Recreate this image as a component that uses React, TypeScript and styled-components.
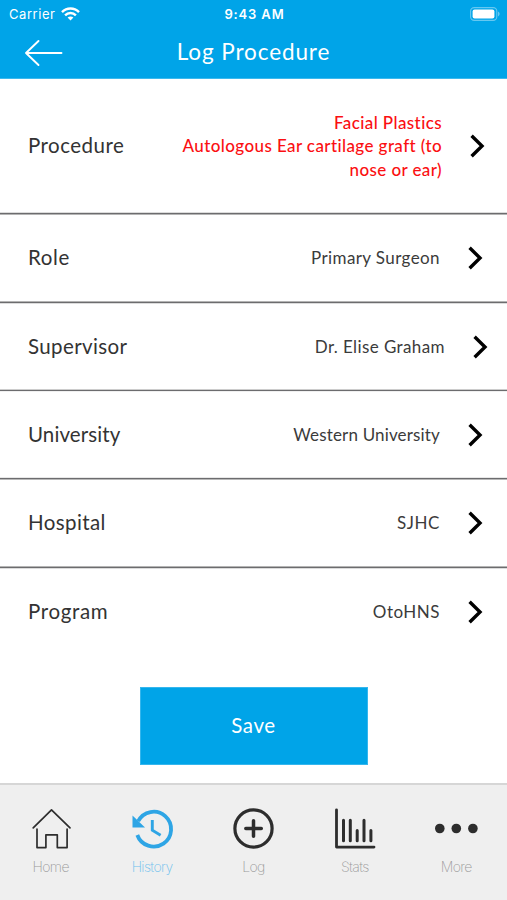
import React from "react";
import styled, { createGlobalStyle } from "styled-components";

const BLUE = "#00a4e8";

const GlobalStyle = createGlobalStyle`
  * { box-sizing: border-box; }
  body { margin: 0; background: #fff; }
`;

const Screen = styled.div`
  width: 507px;
  height: 900px;
  display: flex;
  flex-direction: column;
  overflow: hidden;
  background: #fff;
  color: #333;
  font-family: Lato, "Open Sans", sans-serif;
`;

const Header = styled.header`
  height: 79px;
  flex: none;
  background: ${BLUE};
  border-bottom: 1px solid #3cb9ee;
  color: #fff;
`;

const StatusBar = styled.div`
  height: 27px;
  display: grid;
  grid-template-columns: 1fr auto 1fr;
  align-items: center;
  padding: 1px 7px 0 9px;
  font-family: Inter, sans-serif;
  font-size: 13px;
`;

const Carrier = styled.div`
  display: flex;
  align-items: center;
  gap: 6px;
  letter-spacing: 0.55px;
`;

const Clock = styled.div`
  font-weight: 600;
  letter-spacing: 0.85px;
`;

const BatterySlot = styled.div`
  display: flex;
  justify-content: flex-end;
`;

const NavBar = styled.div`
  height: 50px;
  display: grid;
  grid-template-columns: 64px 1fr 64px;
  align-items: center;
`;

const BackButton = styled.button`
  display: flex;
  padding: 1px 0 0 24px;
  border: 0;
  background: none;
  color: inherit;
`;

const Title = styled.h1`
  margin: 0;
  padding-bottom: 1px;
  font-size: 22.5px;
  line-height: 26px;
  font-weight: 400;
  letter-spacing: 0.9px;
  text-align: center;
`;

const List = styled.main`
  flex: none;
`;

const Row = styled.div<{ $height: number; $edge?: [string, string]; $end: number }>`
  height: ${(p) => p.$height}px;
  display: flex;
  align-items: center;
  justify-content: space-between;
  padding: 0 ${(p) => p.$end}px 0 28px;
  border-bottom: ${(p) => (p.$edge ? "1px solid #6c6c6e" : "0")};
  box-shadow: ${(p) => (p.$edge ? `inset 0 -1px ${p.$edge[0]}, 0 1px ${p.$edge[1]}` : "none")};
`;

const Label = styled.div<{ $track: number }>`
  padding-bottom: 2px;
  font-size: 20.5px;
  line-height: 26px;
  letter-spacing: ${(p) => p.$track}px;
`;

const ValueGroup = styled.div`
  display: flex;
  align-items: center;
  gap: 28px;
`;

const Value = styled.div<{ $alert?: boolean; $track: number }>`
  font-size: 17px;
  font-weight: ${(p) => (p.$alert ? 500 : 400)};
  line-height: 23.5px;
  white-space: pre-line;
  text-align: right;
  letter-spacing: ${(p) => p.$track}px;
  color: ${(p) => (p.$alert ? "#fb0f12" : "#3b3b3b")};
`;

const Actions = styled.div`
  flex: 1;
  display: flex;
  justify-content: center;
  align-items: flex-start;
  padding-top: 32px;
`;

const SaveButton = styled.button`
  width: 228px;
  height: 78px;
  padding: 0 0 2px;
  border: 1px solid #35b6ed;
  background: ${BLUE};
  color: #fff;
  font-family: inherit;
  font-size: 20.5px;
  letter-spacing: 0.6px;
`;

const TabBar = styled.nav`
  height: 117px;
  flex: none;
  display: grid;
  grid-template-columns: repeat(5, 1fr);
  background: #efefef;
  border-top: 2px solid #d6d6d6;
`;

const Tab = styled.div<{ $active?: boolean; $track: number }>`
  display: flex;
  flex-direction: column;
  align-items: center;
  padding-top: 22px;
  gap: 6px;
  color: ${(p) => (p.$active ? "#6dc0ee" : "#9a9a9a")};
  font-family: Inter, sans-serif;
  font-weight: 200;
  font-size: 14px;
  line-height: 20px;
  letter-spacing: ${(p) => p.$track}px;
`;

const WifiIcon = () => (
  <svg width="19" height="14" viewBox="0 0 19 14" fill="none" stroke="#fff" strokeWidth="2.4">
    <path d="M1 5.2C5.8.3 13.2.3 18 5.2" />
    <path d="M4.1 8.3c3-3.1 7.8-3.1 10.800 0" />
    <path d="M9.500 13.600 6.600 10.600c1.700-1.500 4.100-1.500 5.800 0z" fill="#fff" stroke="none" />
  </svg>
);

const BatteryIcon = () => (
  <svg width="31" height="14" viewBox="0 0 31 14">
    <rect x="1.600" y="0.600" width="26.200" height="12.800" rx="3.600" fill="none" stroke="#66c8f1" strokeWidth="1.100" />
    <rect x="3.600" y="2.400" width="21.800" height="9.200" rx="2" fill="#fff" />
    <path d="M29.200 4.600c1.800.8 1.800 4 0 4.800z" fill="#7fd1f3" />
  </svg>
);

const BackArrow = () => (
  <svg width="40" height="28" viewBox="0 0 40 28" fill="none" stroke="#fff" strokeWidth="1.9" strokeLinecap="round" strokeLinejoin="round">
    <path d="M37.500 14H2M14.500 2 2 14l12.500 12" />
  </svg>
);

const Chevron = () => (
  <svg width="15" height="24" viewBox="0 0 15 24" fill="none" stroke="#000" strokeWidth="3.4">
    <path d="M1.600 1.800 12 12 1.600 22.200" />
  </svg>
);

const HomeIcon = () => (
  <svg width="44" height="44" viewBox="0 0 44 44" fill="none" stroke="#2d2d2d" strokeWidth="1.700" strokeLinecap="round" strokeLinejoin="round">
    <path d="M4.200 20.800 22.500 2.800l18.500 18M8 22V40.600h8.900V27.800h11.400v12.800h9.800V22" />
  </svg>
);

const HistoryIcon = () => (
  <svg width="44" height="44" viewBox="0 0 44 44" fill="none" stroke="#2ea5e5" strokeWidth="3.800">
    <path d="M8.200 14.200A17.400 17.400 0 1 1 7.300 28" />
    <path d="M2.500 8.500V20.500H15z" fill="#2ea5e5" stroke="none" />
    <path d="M22.300 13v10.200l8.300 5" strokeWidth="2.900" />
  </svg>
);

const LogIcon = () => (
  <svg width="44" height="44" viewBox="0 0 44 44" fill="none" stroke="#2d2d2d" strokeWidth="3.200" strokeLinecap="round">
    <circle cx="22.500" cy="21.500" r="18.600" />
    <path d="M22.500 13.800v15.500M14.800 21.500h15.500" strokeWidth="3.500" />
  </svg>
);

const StatsIcon = () => (
  <svg width="44" height="44" viewBox="0 0 44 44" fill="none" stroke="#2d2d2d" strokeWidth="3" strokeLinecap="round" strokeLinejoin="round">
    <path d="M3.500 2.800v37.300h37.500" strokeWidth="2.800" />
    <path d="M10.500 13.300v20.500M17.300 13.300v20.500M24.200 23.600v10.200M31 13.300v20.500M37.900 23.600v10.200" />
  </svg>
);

const MoreIcon = () => (
  <svg width="44" height="44" viewBox="0 0 44 44" fill="#2d2d2d">
    <circle cx="5.800" cy="21.500" r="4.800" />
    <circle cx="22.300" cy="21.500" r="4.800" />
    <circle cx="38.900" cy="21.500" r="4.800" />
  </svg>
);

type RowData = {
  label: string;
  value: string;
  height: number;
  edge?: [string, string];
  labelTrack: number;
  valueTrack: number;
  end: number;
  alert?: boolean;
};

const rows: RowData[] = [
  { label: "Procedure", value: "Facial Plastics\nAutologous Ear cartilage graft (to\nnose or ear)", height: 135, edge: ["#dcdcdc", "#b4b4b4"], labelTrack: 0.48, valueTrack: 0.4, end: 22, alert: true },
  { label: "Role", value: "Primary Surgeon", height: 89, edge: ["#b4b4b4", "#dcdcdc"], labelTrack: 0.6, valueTrack: 0.4, end: 24 },
  { label: "Supervisor", value: "Dr. Elise Graham", height: 88, edge: ["#cccccc", "#f0f0f0"], labelTrack: 0.38, valueTrack: 0.4, end: 19 },
  { label: "University", value: "Western University", height: 88, edge: ["#e8e8e8", "#b8b8b8"], labelTrack: 0.1, valueTrack: 0.16, end: 24 },
  { label: "Hospital", value: "SJHC", height: 89, edge: ["#b4b4b4", "#dcdcdc"], labelTrack: 0.4, valueTrack: 0.6, end: 24 },
  { label: "Program", value: "OtoHNS", height: 87, labelTrack: 0.65, valueTrack: 0.5, end: 24 },
];

const tabs = [
  { label: "Home", Icon: HomeIcon, track: -0.6 },
  { label: "History", Icon: HistoryIcon, track: -0.6, active: true },
  { label: "Log", Icon: LogIcon, track: -0.6 },
  { label: "Stats", Icon: StatsIcon, track: -0.6 },
  { label: "More", Icon: MoreIcon, track: -0.6 },
];

export default function App() {
  return (
    <>
      <GlobalStyle />
      <Screen>
        <Header>
          <StatusBar>
            <Carrier>
              Carrier
              <WifiIcon />
            </Carrier>
            <Clock>9:43 AM</Clock>
            <BatterySlot>
              <BatteryIcon />
            </BatterySlot>
          </StatusBar>
          <NavBar>
            <BackButton aria-label="Back">
              <BackArrow />
            </BackButton>
            <Title>Log Procedure</Title>
          </NavBar>
        </Header>
        <List>
          {rows.map((r) => (
            <Row key={r.label} $height={r.height} $edge={r.edge} $end={r.end}>
              <Label $track={r.labelTrack}>{r.label}</Label>
              <ValueGroup>
                <Value $alert={r.alert} $track={r.valueTrack}>
                  {r.value}
                </Value>
                <Chevron />
              </ValueGroup>
            </Row>
          ))}
        </List>
        <Actions>
          <SaveButton>Save</SaveButton>
        </Actions>
        <TabBar>
          {tabs.map(({ label, Icon, track, active }) => (
            <Tab key={label} $active={active} $track={track}>
              <Icon />
              {label}
            </Tab>
          ))}
        </TabBar>
      </Screen>
    </>
  );
}
